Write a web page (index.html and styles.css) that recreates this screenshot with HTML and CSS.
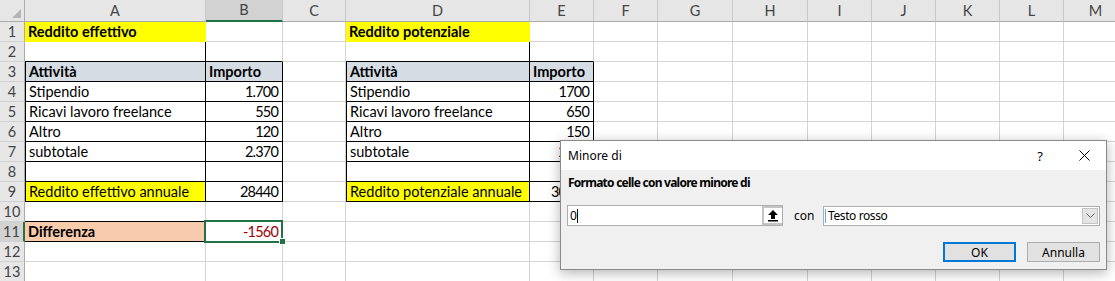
FILE: index.html
```html
<!DOCTYPE html>
<html lang="it">
<head>
    <meta charset="UTF-8">
    <meta name="viewport" content="width=device-width, initial-scale=1.0">
    <title>Minore di</title>
    <link rel="stylesheet" href="styles.css">
</head>
<body>
    <div class="sheet">
        <!-- column headers -->
        <div class="row head">
            <div class="corner"><span class="tri"></span></div>
            <div class="ch">A</div><div class="ch sel">B</div><div class="ch">C</div><div class="ch">D</div><div class="ch">E</div><div class="ch">F</div><div class="ch">G</div><div class="ch">H</div><div class="ch">I</div><div class="ch">J</div><div class="ch">K</div><div class="ch">L</div><div class="ch">M</div>
        </div>

        <div class="row">
            <div class="rh">1</div>
            <div class="c yel b">Reddito effettivo</div><div class="c"></div><div class="c"></div>
            <div class="c yel b">Reddito potenziale</div><div class="c"></div>
            <div class="c"></div><div class="c"></div><div class="c"></div><div class="c"></div><div class="c"></div><div class="c"></div><div class="c"></div><div class="c"></div>
        </div>
        <div class="row">
            <div class="rh">2</div>
            <div class="c kr kb"></div><div class="c kb"></div><div class="c"></div>
            <div class="c kr kb"></div><div class="c kb"></div>
            <div class="c"></div><div class="c"></div><div class="c"></div><div class="c"></div><div class="c"></div><div class="c"></div><div class="c"></div><div class="c"></div>
        </div>
        <div class="row">
            <div class="rh">3</div>
            <div class="c kl kr kb th b">Attività</div><div class="c kr kb th b">Importo</div><div class="c"></div>
            <div class="c kl kr kb th b">Attività</div><div class="c kr kb th b">Importo</div>
            <div class="c"></div><div class="c"></div><div class="c"></div><div class="c"></div><div class="c"></div><div class="c"></div><div class="c"></div><div class="c"></div>
        </div>
        <div class="row">
            <div class="rh">4</div>
            <div class="c kl kr kb">Stipendio</div><div class="c kr kb num">1.700</div><div class="c"></div>
            <div class="c kl kr kb">Stipendio</div><div class="c kr kb num">1700</div>
            <div class="c"></div><div class="c"></div><div class="c"></div><div class="c"></div><div class="c"></div><div class="c"></div><div class="c"></div><div class="c"></div>
        </div>
        <div class="row">
            <div class="rh">5</div>
            <div class="c kl kr kb">Ricavi lavoro freelance</div><div class="c kr kb num">550</div><div class="c"></div>
            <div class="c kl kr kb">Ricavi lavoro freelance</div><div class="c kr kb num">650</div>
            <div class="c"></div><div class="c"></div><div class="c"></div><div class="c"></div><div class="c"></div><div class="c"></div><div class="c"></div><div class="c"></div>
        </div>
        <div class="row">
            <div class="rh">6</div>
            <div class="c kl kr kb">Altro</div><div class="c kr kb num">120</div><div class="c"></div>
            <div class="c kl kr kb">Altro</div><div class="c kr kb num">150</div>
            <div class="c"></div><div class="c"></div><div class="c"></div><div class="c"></div><div class="c"></div><div class="c"></div><div class="c"></div><div class="c"></div>
        </div>
        <div class="row">
            <div class="rh">7</div>
            <div class="c kl kr kb">subtotale</div><div class="c kr kb num">2.370</div><div class="c"></div>
            <div class="c kl kr kb">subtotale</div><div class="c kr kb num">2500</div>
            <div class="c"></div><div class="c"></div><div class="c"></div><div class="c"></div><div class="c"></div><div class="c"></div><div class="c"></div><div class="c"></div>
        </div>
        <div class="row">
            <div class="rh">8</div>
            <div class="c kl kr kb"></div><div class="c kr kb"></div><div class="c"></div>
            <div class="c kl kr kb"></div><div class="c kr kb"></div>
            <div class="c"></div><div class="c"></div><div class="c"></div><div class="c"></div><div class="c"></div><div class="c"></div><div class="c"></div><div class="c"></div>
        </div>
        <div class="row">
            <div class="rh">9</div>
            <div class="c yel kl kr kb">Reddito effettivo annuale</div><div class="c kr kb num">28440</div><div class="c"></div>
            <div class="c yel kl kr kb">Reddito potenziale annuale</div><div class="c kr kb num">30000</div>
            <div class="c"></div><div class="c"></div><div class="c"></div><div class="c"></div><div class="c"></div><div class="c"></div><div class="c"></div><div class="c"></div>
        </div>
        <div class="row">
            <div class="rh">10</div>
            <div class="c kb"></div><div class="c"></div><div class="c"></div>
            <div class="c"></div><div class="c"></div>
            <div class="c"></div><div class="c"></div><div class="c"></div><div class="c"></div><div class="c"></div><div class="c"></div><div class="c"></div><div class="c"></div>
        </div>
        <div class="row">
            <div class="rh sel">11</div>
            <div class="c peach kb b">Differenza</div><div class="c num neg cur">-1560<span class="handle"></span></div><div class="c"></div>
            <div class="c"></div><div class="c"></div>
            <div class="c"></div><div class="c"></div><div class="c"></div><div class="c"></div><div class="c"></div><div class="c"></div><div class="c"></div><div class="c"></div>
        </div>
        <div class="row">
            <div class="rh">12</div>
            <div class="c"></div><div class="c"></div><div class="c"></div>
            <div class="c"></div><div class="c"></div>
            <div class="c"></div><div class="c"></div><div class="c"></div><div class="c"></div><div class="c"></div><div class="c"></div><div class="c"></div><div class="c"></div>
        </div>
        <div class="row">
            <div class="rh">13</div>
            <div class="c"></div><div class="c"></div><div class="c"></div>
            <div class="c"></div><div class="c"></div>
            <div class="c"></div><div class="c"></div><div class="c"></div><div class="c"></div><div class="c"></div><div class="c"></div><div class="c"></div><div class="c"></div>
        </div>
    </div>

    <!-- Conditional formatting dialog -->
    <div class="dialog">
        <div class="dlg-title">
            <span class="dlg-name">Minore di</span>
            <span class="tb-btn">?</span>
            <span class="tb-btn">
                <svg width="11" height="11" viewBox="0 0 11 11"><path d="M0.5 0.5 L10.5 10.5 M10.5 0.5 L0.5 10.5" stroke="#000" stroke-width="1"/></svg>
            </span>
        </div>
        <div class="dlg-body">
            <div class="dlg-label">Formato celle con valore minore di</div>
            <div class="dlg-fields">
                <div class="ref-input">
                    <span class="ref-text">0<span class="caret"></span></span>
                    <span class="ref-btn">
                        <svg width="12" height="13" viewBox="0 0 12 13"><path d="M6 1 L11 6 H8 V10 H4 V6 H1 Z" fill="#000"/><rect x="1" y="11" width="10" height="1.5" fill="#000"/></svg>
                    </span>
                </div>
                <span class="con">con</span>
                <div class="combo">
                    <span class="combo-text"><span class="focus-caret"></span>Testo rosso</span>
                    <span class="combo-btn">
                        <svg width="9" height="5" viewBox="0 0 9 5"><path d="M0.5 0.5 L4.5 4.5 L8.5 0.5" fill="none" stroke="#606060" stroke-width="1"/></svg>
                    </span>
                </div>
            </div>
            <div class="dlg-buttons">
                <button class="btn default">OK</button>
                <button class="btn">Annulla</button>
            </div>
        </div>
    </div>
</body>
</html>
```

FILE: styles.css
```css
/* Global */
body {
    margin: 0;
    overflow: hidden;
    background: #fff;
    font-family: Lato, "Liberation Sans", sans-serif;
    font-size: 14.5px;
    color: #000;
}

/* Sheet grid */
.sheet {
    width: max-content;
}

.row {
    display: grid;
    grid-template-columns: 25px 181px 77px 63px 184px 64px 64px 75px 75px 64px 64px 64px 64px 64px;
    height: 20px;
}

.row.head {
    height: 22px;
}

.row > div {
    box-sizing: border-box;
}

.corner {
    display: flex;
    justify-content: flex-end;
    align-items: flex-end;
    padding: 0 3px 3px 0;
    background: #e6e6e6;
    border-right: 1px solid #ababab;
    border-bottom: 1px solid #ababab;
}

.tri {
    width: 0;
    height: 0;
    border-left: 9px solid transparent;
    border-bottom: 9px solid #b4b4b4;
}

.ch {
    background: #e6e6e6;
    border-right: 1px solid #c8c8c8;
    border-bottom: 1px solid #ababab;
    text-align: center;
    line-height: 21px;
    color: #444;
}

.ch.sel {
    background: #d2d2d2;
    border-bottom: 2px solid #217346;
    line-height: 20px;
}

.rh {
    background: #e6e6e6;
    border-right: 1px solid #ababab;
    border-bottom: 1px solid #d0d0d0;
    text-align: center;
    line-height: 19px;
    color: #444;
}

.rh.sel {
    background: #d2d2d2;
    border-right: 2px solid #217346;
}

/* Cells */
.c {
    border-right: 1px solid #d4d4d4;
    border-bottom: 1px solid #d4d4d4;
    padding: 0 3px;
    line-height: 19px;
    white-space: nowrap;
}

.b {
    font-weight: bold;
}

.yel {
    background: #ffff00;
    border-right-color: #ffff00;
    border-bottom-color: #ffff00;
}

.th {
    background: #d6dce4;
}

.peach {
    background: #f8cbad;
    border-right-color: #f8cbad;
}

.kr {
    border-right-color: #000;
}

.kb {
    border-bottom-color: #000;
}

.kl {
    border-left: 1px solid #000;
}

.num {
    text-align: right;
    padding-right: 4px;
    letter-spacing: -0.8px;
}

.neg {
    color: #9c0006;
}

/* Active cell */
.cur {
    position: relative;
}

.cur::after {
    content: "";
    position: absolute;
    left: -2px;
    top: -2px;
    right: -1px;
    bottom: -2px;
    border: 2px solid #217346;
}

.handle {
    position: absolute;
    right: -4px;
    bottom: -4px;
    width: 5px;
    height: 5px;
    background: #217346;
    border: 1px solid #fff;
    z-index: 1;
}

/* Dialog */
.dialog {
    position: absolute;
    left: 560px;
    top: 140px;
    width: 547px;
    height: 130px;
    box-sizing: border-box;
    border: 1px solid #8a8a8a;
    box-shadow: 0 3px 12px rgba(0, 0, 0, 0.3);
    display: flex;
    flex-direction: column;
    font-family: "Noto Sans", "Open Sans", sans-serif;
    font-size: 12px;
    color: #000;
    z-index: 2;
}

.dlg-title {
    height: 29px;
    background: #fff;
    display: flex;
    align-items: center;
    padding-left: 7px;
}

.dlg-name {
    flex: 1;
}

.tb-btn {
    width: 44px;
    display: flex;
    justify-content: center;
    align-items: center;
    font-size: 13px;
}

.dlg-body {
    flex: 1;
    background: #f0f0f0;
    padding: 0 6px;
}

.dlg-label {
    margin-top: 5px;
    line-height: 16px;
    padding-left: 1px;
    font-weight: bold;
    letter-spacing: -0.75px;
}

.dlg-fields {
    display: flex;
    align-items: center;
    margin-top: 14px;
    height: 21px;
}

.ref-input {
    width: 216px;
    height: 21px;
    box-sizing: border-box;
    background: #fff;
    border: 1px solid #adadad;
    display: flex;
}

.ref-text {
    flex: 1;
    padding-left: 2px;
    line-height: 19px;
    display: flex;
    align-items: center;
}

.caret {
    display: inline-block;
    width: 1px;
    height: 14px;
    background: #000;
}

.ref-btn {
    width: 20px;
    box-sizing: border-box;
    border: 2px solid #c4c4c4;
    border-right: 0;
    background: #fff;
    display: flex;
    justify-content: center;
    align-items: center;
}

.con {
    width: 40px;
    box-sizing: border-box;
    padding-left: 11px;
    line-height: 21px;
}

.combo {
    flex: 1;
    height: 20px;
    box-sizing: border-box;
    background: #fff;
    border: 1px solid #adadad;
    display: flex;
    align-items: center;
}

.combo-text {
    flex: 1;
    display: flex;
    align-items: center;
    padding-left: 1px;
    letter-spacing: -0.4px;
}

.focus-caret {
    display: inline-block;
    width: 1px;
    height: 14px;
    background: #6aa9e0;
    margin-right: 2px;
}

.combo-btn {
    width: 16px;
    height: 16px;
    box-sizing: border-box;
    margin-right: 1px;
    background: #e5e5e5;
    border: 1px solid #c4c4c4;
    display: flex;
    justify-content: center;
    align-items: center;
}

.dlg-buttons {
    display: flex;
    justify-content: flex-end;
    gap: 11px;
    margin-top: 16px;
}

.btn {
    width: 73px;
    height: 20px;
    box-sizing: border-box;
    padding: 0;
    background: #e1e1e1;
    border: 1px solid #adadad;
    font-family: "Noto Sans", "Open Sans", sans-serif;
    font-size: 12px;
    color: #000;
}

.btn.default {
    border: 2px solid #0078d7;
}
```
